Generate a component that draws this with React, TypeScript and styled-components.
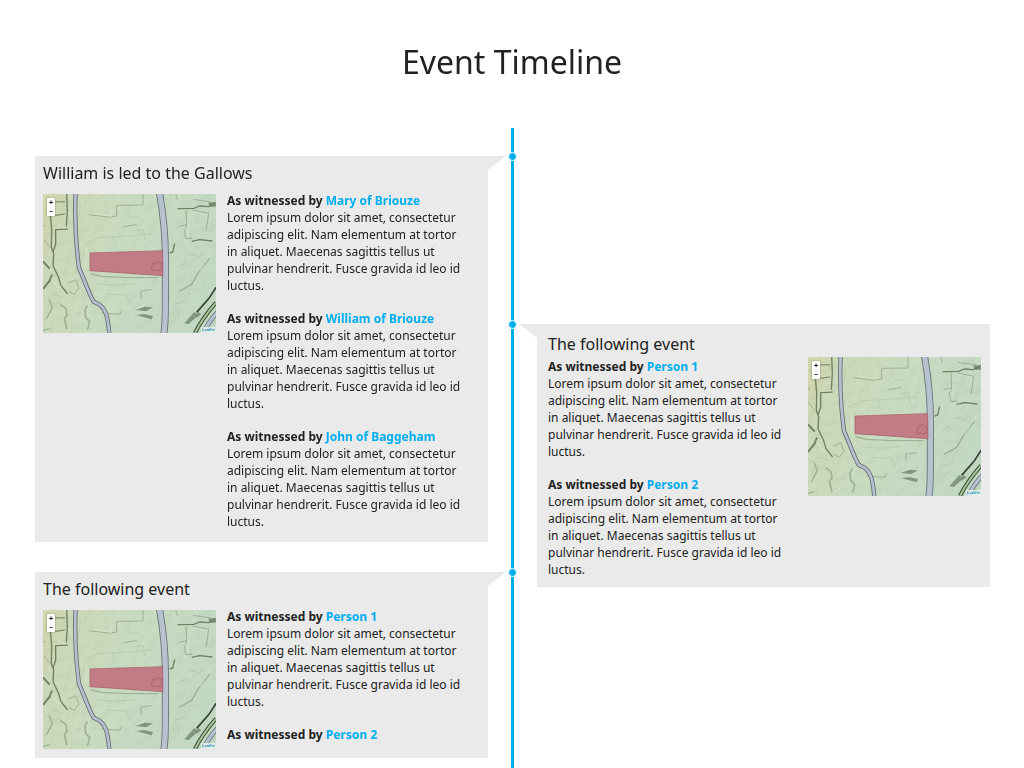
import React, { useId } from "react";
import styled, { createGlobalStyle } from "styled-components";

const GlobalStyle = createGlobalStyle`
  *, *::before, *::after { box-sizing: border-box; }
  body {
    margin: 0;
    background: #fff;
    color: #222;
    font-family: "Noto Sans", "Open Sans", sans-serif;
  }
  h1, h2, h3, p { margin: 0; font-weight: 400; }
`;

const Page = styled.div`
  display: flex;
  flex-direction: column;
  min-height: 100vh;
`;

const Title = styled.h1`
  padding: 38px 16px 42px;
  font-size: 32px;
  line-height: 48px;
  text-align: center;
`;

const Timeline = styled.main`
  flex: 1;
  display: grid;
  grid-template-columns: minmax(0, 1fr) 49px minmax(0, 1fr);
  padding: 0 34px 0 35px;
`;

const Column = styled.div<{ $offset: number }>`
  display: flex;
  flex-direction: column;
  gap: 30px;
  padding: ${(p) => p.$offset}px 0 10px;
`;

const Rail = styled.div`
  width: 3px;
  justify-self: center;
  background: #00aeef;
`;

type Side = "left" | "right";

const Card = styled.article<{ $side: Side }>`
  position: relative;
  padding: ${(p) => (p.$side === "left" ? "7px 8px 9px" : "10px 9px 6px 11px")};
  background: #eaeaea;

  &::before {
    content: "";
    position: absolute;
    top: 0;
    ${(p) => (p.$side === "left" ? "left: 100%;" : "right: 100%;")}
    width: 18px;
    height: 14px;
    background: #eaeaea;
    clip-path: ${(p) =>
      p.$side === "left" ? "polygon(0 0, 100% 0, 0 100%)" : "polygon(0 0, 100% 0, 100% 100%)"};
  }

  &::after {
    content: "";
    position: absolute;
    top: -4px;
    ${(p) => (p.$side === "left" ? "right: -29px;" : "left: -29px;")}
    width: 9px;
    height: 9px;
    border: 1px solid #fff;
    border-radius: 50%;
    background: #00aeef;
  }
`;

const CardTitle = styled.h2`
  font-size: 16px;
  line-height: 21px;
`;

const CardBody = styled.div<{ $side: Side }>`
  display: flex;
  flex-direction: ${(p) => (p.$side === "left" ? "row" : "row-reverse")};
  justify-content: ${(p) => (p.$side === "left" ? "flex-start" : "space-between")};
  align-items: flex-start;
  gap: 11px;
  padding-top: ${(p) => (p.$side === "left" ? 8 : 3)}px;
`;

const Accounts = styled.div`
  flex: 0 1 240px;
  display: flex;
  flex-direction: column;
  gap: 16px;
  padding-bottom: 3px;
  font-size: 12px;
  line-height: 17px;
`;

const Witness = styled.h3`
  font-size: 12px;
  line-height: 17px;
  font-weight: 700;
`;

const PersonLink = styled.a`
  color: #00aeef;
  text-decoration: none;
`;

const MapFrame = styled.figure<{ $side: Side }>`
  position: relative;
  flex: none;
  width: 173px;
  height: 139px;
  margin: ${(p) => (p.$side === "left" ? 2 : -1)}px 0 0;
  overflow: hidden;

  svg { display: block; width: 100%; height: 100%; }
`;

const ZoomControl = styled.div`
  position: absolute;
  top: 4px;
  left: 4px;
  width: 8px;
  border-radius: 1px;
  background: #fff;
  box-shadow: 0 0 1px 1px rgba(90, 100, 80, 0.2);
`;

const ZoomButton = styled.button`
  display: block;
  width: 8px;
  height: 9px;
  padding: 0;
  border: 0;
  background: none;
  color: #111;
  font: 700 7px/9px "Liberation Sans", sans-serif;
  text-align: center;
`;

const Attribution = styled.a`
  position: absolute;
  right: 0;
  bottom: 0;
  width: 15px;
  height: 6px;
  background: rgba(240, 248, 244, 0.75);
  color: #2b8fc0;
  font: italic 700 4px/6px "Liberation Sans", sans-serif;
  text-align: center;
  text-decoration: none;
`;

function TerrainMap({ side }: { side: Side }) {
  const id = useId();
  const land = `${id}land`;
  const relief = `${id}relief`;
  const soft = `${id}soft`;
  return (
    <MapFrame $side={side}>
      <svg viewBox="0 0 519 417" preserveAspectRatio="none" role="img" aria-label="Map of the event location">
        <defs>
          <linearGradient id={land} x1="0" y1="0.2" x2="1" y2="0.5">
            <stop offset="0" stopColor="#d2d5ae" />
            <stop offset="0.12" stopColor="#cbd9b9" />
            <stop offset="0.5" stopColor="#c9dcc1" />
            <stop offset="1" stopColor="#c2d9c3" />
          </linearGradient>
          <filter id={relief} x="0" y="0" width="100%" height="100%">
            <feTurbulence type="fractalNoise" baseFrequency="0.03" numOctaves="3" seed="8" />
            <feDiffuseLighting surfaceScale="5" diffuseConstant="1.1" lightingColor="#fff">
              <feDistantLight azimuth="225" elevation="62" />
            </feDiffuseLighting>
          </filter>
          <filter id={soft}>
            <feGaussianBlur stdDeviation="2" />
          </filter>
        </defs>
        <rect width="519" height="417" fill={`url(#${land})`} />
        <rect width="519" height="417" filter={`url(#${relief})`} opacity="0.28" style={{ mixBlendMode: "multiply" }} />

        <g fill="none" stroke="#59694c" strokeLinejoin="round" filter={`url(#${soft})`}>
          <g strokeWidth="4" opacity="0.8">
            <path d="M22 60 L26 110 L25 160 L32 180 L30 215 L46 248 L54 275 L74 300" />
            <path d="M71 0 L73 48 L70 98 M74 105 L38 107 L38 150 L30 175" />
            <path d="M36 24 L66 23 M36 64 L66 60" strokeWidth="3" />
            <path d="M0 202 L20 224 M0 285 L20 260 L27 242" strokeWidth="6" />
            <path d="M404 44 L452 43 L470 36 L496 38 L514 29" />
            <path d="M380 177 L389 174 L395 149 M446 142 L470 137 L508 141" />
          </g>
          <g strokeWidth="3" opacity="0.36">
            <path d="M429 48 L431 98 L424 108 L428 133 L448 133 M431 93 L406 97 M448 48 L497 58 L490 110" />
            <path d="M139 62 L203 70 M205 68 L221 66 L221 34 L300 33 L300 0" />
            <path d="M242 98 L282 91 M398 0 L403 17 M450 16 L505 24" />
            <path d="M133 334 L126 347 L128 370 L140 382 L134 407" strokeWidth="5" />
            <path d="M52 331 L69 344 L72 364 L64 372 L72 405" strokeWidth="5" />
            <path d="M76 268 L98 257 L108 283 L93 302 L78 292" />
            <path d="M142 239 L174 247 L238 250 L344 251" strokeWidth="4" />
            <path d="M294 315 L294 291 L326 287 M174 357 L230 361 L237 349" />
            <path d="M408 292 L446 271 L466 236 L500 192 M10 375 L28 341 L18 316 M0 409 L20 404" strokeWidth="4" />
            <path d="M6 92 L0 100 M2 137 L20 160" />
          </g>
          <g strokeWidth="3" opacity="0.13">
            <path d="M100 88 L110 60 L112 30 M120 150 L170 130 L230 128 L330 120" />
            <path d="M255 58 L262 70 L290 66 M270 110 L300 106 L306 140 M210 125 L214 150 M160 270 L220 274 L280 268 M190 300 L250 304 L262 330" />
            <path d="M400 220 L430 205 M440 180 L470 190 L480 170 M395 330 L430 320 M405 360 L420 345 M5 40 L20 70 M5 320 L30 300 L60 310" />
          </g>
        </g>
        <g fill="#596b50" filter={`url(#${soft})`} opacity="0.6">
          <path d="M278 347 L305 338 L330 340 L309 352Z M280 364 L303 360 L330 366 L326 376Z" />
          <path d="M424 388 L454 354 L466 364 L437 390Z M456 366 L466 355 L475 361 L462 371Z" />
          <path d="M494 26 L519 23 L519 38 L503 39Z" />
        </g>
        <g fill="none" stroke="#e4eed6" strokeWidth="4" opacity="0.4" filter={`url(#${soft})`}>
          <path d="M25 0 L27 55 M34 103 L68 102 M139 57 L204 65 L206 32 M436 87 L436 128 M452 53 L492 62" />
          <path d="M24 250 L49 286 M284 343 L310 332 M470 230 L505 178 M130 160 L130 220" />
        </g>

        <g fill="none">
          <path d="M98 -5 Q93 112 108 222 C125 259 137 298 152 323 C177 333 181 341 189 359 Q196 381 199 422" stroke="#626c70" strokeWidth="13" />
          <path d="M98 -5 Q93 112 108 222 C125 259 137 298 152 323 C177 333 181 341 189 359 Q196 381 199 422" stroke="#b6c0d1" strokeWidth="8" />
          <path d="M349 -5 Q369 103 367 214 L367 336 Q367 395 362 422" stroke="#656e76" strokeWidth="21" />
          <path d="M349 -5 Q369 103 367 214 L367 336 Q367 395 362 422" stroke="#b8c1d0" strokeWidth="16" />
          <path d="M456 417 Q477 374 519 326" stroke="#3b5037" strokeWidth="12" />
          <path d="M456 417 Q477 374 519 326" stroke="#a6c29b" strokeWidth="6" />
          <path d="M461 355 L498 313 L519 280" stroke="#304334" strokeWidth="5" />
          <path d="M480 422 Q494 385 524 354" stroke="#626b73" strokeWidth="14" />
          <path d="M480 422 Q494 385 524 354" stroke="#b5c0d0" strokeWidth="9" />
        </g>
        <path d="M141 177 L359 170 L360 245 L141 230Z" fill="#c17c85" stroke="#a95464" strokeWidth="2" />
        <path d="M330 208 H337 Q338 201 345 203 Q350 206 352 209 H357 V228 H350 Q346 235 341 228 H326 V219 L330 216Z" fill="none" stroke="#a75c68" strokeWidth="2" />
      </svg>
      <ZoomControl>
        <ZoomButton type="button" aria-label="Zoom in">+</ZoomButton>
        <ZoomButton type="button" aria-label="Zoom out">−</ZoomButton>
      </ZoomControl>
      <Attribution href="#leaflet">Leaflet</Attribution>
    </MapFrame>
  );
}

interface Account {
  person: string;
  text?: string;
}

interface EventCardProps {
  title: string;
  side: Side;
  accounts: Account[];
}

function EventCard({ title, side, accounts }: EventCardProps) {
  return (
    <Card $side={side}>
      <CardTitle>{title}</CardTitle>
      <CardBody $side={side}>
        <TerrainMap side={side} />
        <Accounts>
          {accounts.map(({ person, text }) => (
            <section key={person}>
              <Witness>
                As witnessed by <PersonLink href="#person">{person}</PersonLink>
              </Witness>
              {text && <p>{text}</p>}
            </section>
          ))}
        </Accounts>
      </CardBody>
    </Card>
  );
}

const LOREM =
  "Lorem ipsum dolor sit amet, consectetur adipiscing elit. Nam elementum at tortor in aliquet. Maecenas sagittis tellus ut pulvinar hendrerit. Fusce gravida id leo id luctus.";

export default function App() {
  return (
    <Page>
      <GlobalStyle />
      <Title>Event Timeline</Title>
      <Timeline>
        <Column $offset={28}>
          <EventCard
            title="William is led to the Gallows"
            side="left"
            accounts={[
              { person: "Mary of Briouze", text: LOREM },
              { person: "William of Briouze", text: LOREM },
              { person: "John of Baggeham", text: LOREM },
            ]}
          />
          <EventCard
            title="The following event"
            side="left"
            accounts={[{ person: "Person 1", text: LOREM }, { person: "Person 2" }]}
          />
        </Column>
        <Rail />
        <Column $offset={196}>
          <EventCard
            title="The following event"
            side="right"
            accounts={[
              { person: "Person 1", text: LOREM },
              { person: "Person 2", text: LOREM },
            ]}
          />
        </Column>
      </Timeline>
    </Page>
  );
}
